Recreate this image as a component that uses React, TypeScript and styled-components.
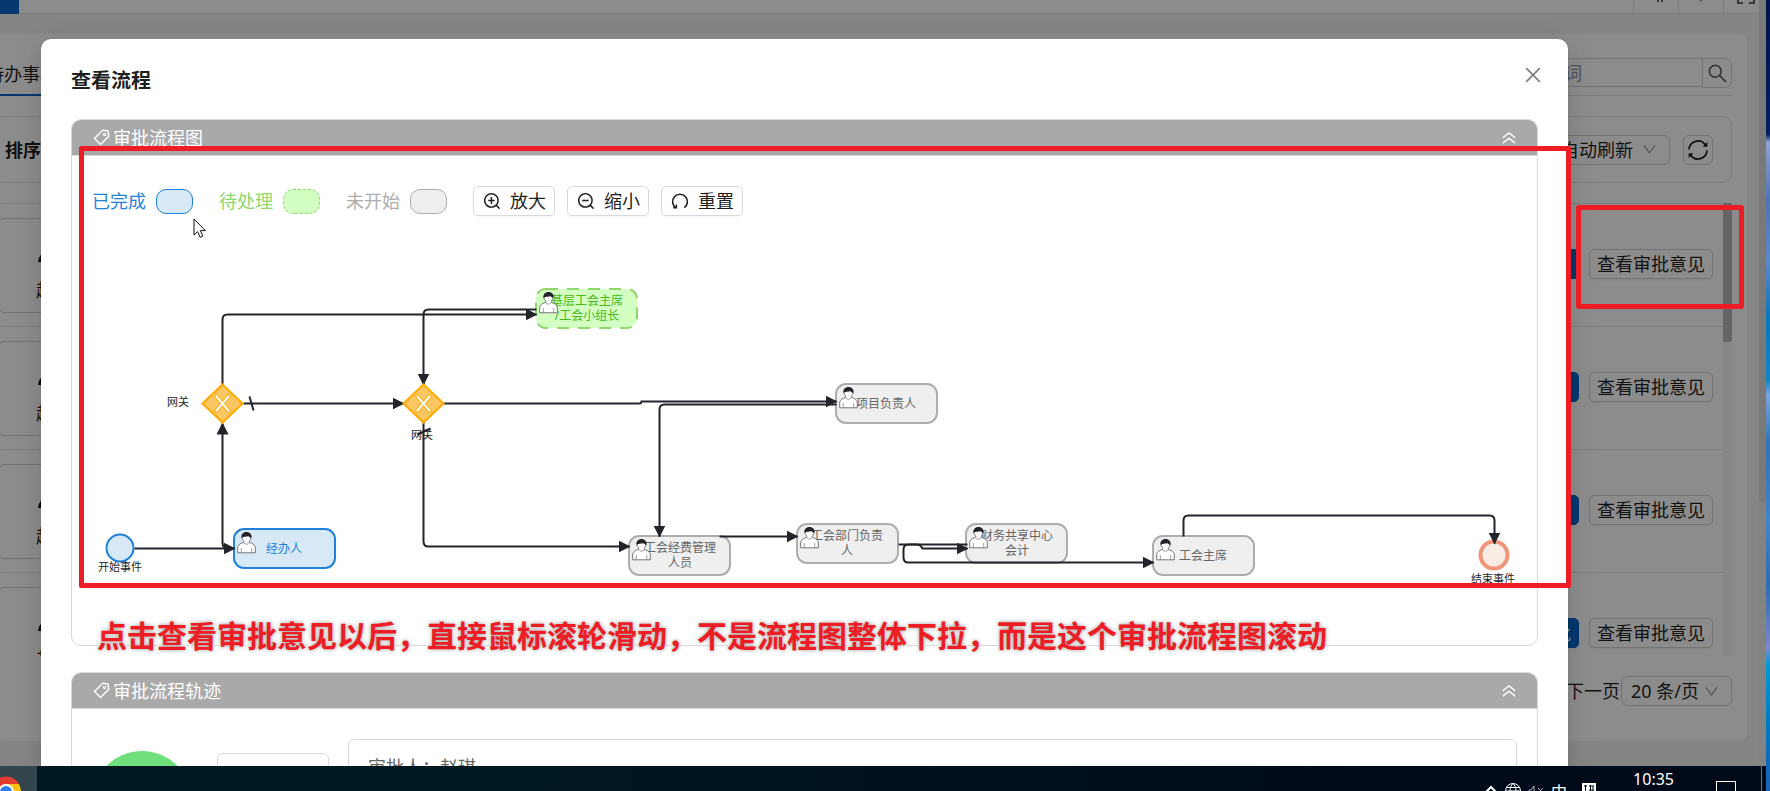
import React from 'react';
import styled, { createGlobalStyle } from 'styled-components';
import {
  AiOutlineClose,
  AiOutlineDoubleRight,
  AiOutlineDown,
  AiOutlineSearch,
  AiOutlineTag,
  AiOutlineZoomIn,
  AiOutlineZoomOut,
} from 'react-icons/ai';

const GlobalStyle = createGlobalStyle`
  *, *::before, *::after { box-sizing: border-box; }
  body {
    margin: 0;
    overflow: hidden;
    font-family: "Noto Sans", "Noto Sans CJK SC", sans-serif;
    font-size: 18px;
    line-height: 28px;
    color: #1f1f1f;
  }
  button, input, select { font: inherit; color: inherit; }
`;

const RED = '#ee1c25';
const BLUE = '#0a66c9';

/* ---------- desktop frame ---------- */

const Desktop = styled.div`
  display: grid;
  grid-template-columns: 1fr 4px;
  height: 100vh;
  overflow: hidden;
`;

const Screen = styled.div`
  display: flex;
  flex-direction: column;
  min-width: 0;
  min-height: 0;
`;

const Wallpaper = styled.div`
  background: linear-gradient(
    #00124a 0, #04205f 17%, #8fa5cc 18%, #4f74b6 25%, #5f86c8 33%, #0a78bc 40%,
    #1286c4 48%, #7fa3dc 50%, #2f74b4 56%, #3f86c4 66%, #2f6cb0 74%, #7f88cc 82%,
    #0098d4 84%, #0078c4 92%, #1a60b0 100%
  );
`;

const Browser = styled.div`
  position: relative;
  display: flex;
  flex: 1;
  min-height: 0;
  overflow: hidden;
  background: #f2f2f2;
`;

const PageScrollbar = styled.div`
  width: 7px;
  background: #eeeeee;
`;

const PageThumb = styled.div`
  height: 503px;
  background: #dcdcdc;
  border-radius: 0 0 3px 3px;
`;

/* ---------- page behind the dialog ---------- */

const Page = styled.div`
  display: flex;
  flex: 1;
  flex-direction: column;
  min-width: 0;
  margin-left: -14px;
`;

const TopBar = styled.header`
  display: flex;
  justify-content: space-between;
  height: 14px;
  background: #fff;
  border-bottom: 1px solid #e4e4e4;
`;

const ActiveTag = styled.div`
  width: 33px;
  height: 14px;
  background: ${BLUE};
`;

const TopTools = styled.div`
  display: flex;
`;

const TopTool = styled.div<{ $w: number }>`
  display: flex;
  align-items: flex-end;
  justify-content: ${(p) => (p.$w < 45 ? 'flex-end' : 'center')};
  width: ${(p) => p.$w}px;
  height: 13px;
  padding: 0 4px 9px;
  overflow: hidden;
  border-left: 1px solid #dedede;
  svg { flex: none; }
`;

const Card = styled.main`
  display: flex;
  flex: 1;
  flex-direction: column;
  min-height: 0;
  margin: 20px 12px 25px 0;
  padding: 0 15px 35px 0;
  background: #fff;
  border-radius: 8px;
`;

const TabRow = styled.div`
  display: flex;
  align-items: center;
  justify-content: space-between;
  height: 62px;
  border-bottom: 1px solid #e0e0e0;
`;

const Tab = styled.div`
  height: 62px;
  padding: 26px 24px 0 0;
  border-bottom: 2px solid ${BLUE};
`;

const SearchBox = styled.div`
  display: flex;
  align-self: flex-start;
  padding-top: 24px;
`;

const SearchInput = styled.input`
  width: 241px;
  height: 29px;
  padding: 0 12px;
  background: none;
  border: 1px solid #d0d0d0;
  border-right: 0;
  &::placeholder { color: #8f96a3; opacity: 1; }
`;

const SquareButton = styled.button<{ $edge?: boolean }>`
  display: flex;
  align-items: center;
  justify-content: center;
  width: 30px;
  height: 30px;
  padding: 0;
  background: none;
  border: 1px solid #d0d0d0;
  border-radius: ${(p) => (p.$edge ? '0 7px 7px 0' : '6px')};
`;

const FilterBar = styled.div`
  display: flex;
  align-items: center;
  justify-content: space-between;
  height: 67px;
  margin: 20px 0;
  padding: 0 18px;
  border: 1px solid #e2e2e2;
  border-radius: 10px;
`;

const FilterTitle = styled.strong`
  font-weight: 700;
`;

const FilterTools = styled.div`
  display: flex;
  gap: 13px;
`;

const SelectWrap = styled.label<{ $w: number }>`
  display: grid;
  align-items: center;
  width: ${(p) => p.$w}px;
  height: 30px;
  border: 1px solid #d0d0d0;
  border-radius: 6px;
  color: #a8a8a8;
  > * { grid-area: 1 / 1; }
  svg { justify-self: end; margin-right: 11px; pointer-events: none; }
`;

const Select = styled.select`
  width: 100%;
  height: 28px;
  padding: 0 0 0 9px;
  appearance: none;
  background: none;
  border: 0;
  color: #1f1f1f;
`;

const ListArea = styled.div`
  display: flex;
  flex: 1;
  min-height: 0;
  overflow: hidden;
`;

const List = styled.div`
  flex: 1;
  overflow: hidden;
`;

const ListTrack = styled.div`
  width: 9px;
  background: #f4f4f4;
`;

const ListThumb = styled.div`
  height: 139px;
  background: #b9b9b9;
  border-radius: 2px;
`;

const Row = styled.div`
  display: flex;
  align-items: center;
  height: 123px;
  padding: 0 10px 0 12px;
  border-top: 1px solid #e4e4e4;
`;

const RowCard = styled.div`
  display: flex;
  flex: 1;
  flex-direction: column;
  justify-content: flex-end;
  align-items: flex-start;
  height: 95px;
  margin-right: 260px;
  padding: 0 0 8px 37px;
  border: 1px solid #d0d0d0;
  border-radius: 6px;
`;

const RowActions = styled.div`
  display: flex;
  gap: 10px;
  padding-bottom: 2px;
`;

const RowButton = styled.button<{ $primary?: boolean }>`
  height: 30px;
  padding: 0 7px;
  line-height: 28px;
  background: ${(p) => (p.$primary ? BLUE : '#fff')};
  color: ${(p) => (p.$primary ? '#fff' : 'inherit')};
  border: 1px solid ${(p) => (p.$primary ? BLUE : '#d0d0d0')};
  border-radius: 5px;
  box-shadow: 0 2px 0 rgba(0, 0, 0, 0.03);
`;

const Pager = styled.div`
  display: flex;
  align-items: center;
  justify-content: flex-end;
  gap: 1px;
  margin-top: 20px;
`;

/* ---------- dialog ---------- */

const Mask = styled.div`
  position: absolute;
  inset: 0;
  padding: 39px 198px 0 41px;
  background: rgba(0, 0, 0, 0.45);
  overflow: hidden;
`;

const Modal = styled.section`
  min-height: 100%;
  background: #fff;
  border-radius: 10px 10px 0 0;
  box-shadow: 0 6px 16px rgba(0, 0, 0, 0.08), 0 3px 6px -4px rgba(0, 0, 0, 0.12),
    0 9px 28px 8px rgba(0, 0, 0, 0.05);
`;

const ModalHeader = styled.header`
  display: flex;
  align-items: flex-start;
  justify-content: space-between;
  padding: 26px 24px 0 30px;
`;

const ModalTitle = styled.h1`
  margin: 0;
  font-size: 20px;
  line-height: 32px;
  font-weight: 700;
`;

const CloseButton = styled.button`
  display: flex;
  align-items: center;
  justify-content: center;
  width: 22px;
  height: 20px;
  padding: 0;
  background: none;
  border: 0;
  color: #808080;
  svg { flex: none; }
`;

const ModalBody = styled.div`
  display: flex;
  flex-direction: column;
  gap: 26px;
  padding: 22px 30px;
`;

const Panel = styled.section`
  position: relative;
  border: 1px solid #d9d9d9;
  border-radius: 10px;
`;

const PanelHeader = styled.div`
  display: flex;
  align-items: center;
  height: 36px;
  padding: 0 19px 0 20px;
  background: #a9a9a9;
  border-bottom: 1px solid #d9d9d9;
  border-radius: 9px 9px 0 0;
  color: #fff;
`;

const PanelTitle = styled.h2`
  flex: 1;
  margin: 0 0 0 2px;
  font-size: 18px;
  line-height: 28px;
  font-weight: 400;
`;

const FoldButton = styled.button`
  display: flex;
  padding: 0;
  background: none;
  border: 0;
  color: #fff;
  svg { transform: rotate(-90deg); }
`;

const ToolRow = styled.div`
  display: flex;
  align-items: center;
  height: 60px;
  padding: 30px 20px 0;
`;

type Tone = 'done' | 'todo' | 'idle';

const tones: Record<Tone, { text: string; line: string; fill: string; label: string }> = {
  done: { text: '#1f82d8', line: '#1f82d8', fill: '#d7e8f7', label: '#1f82d8' },
  todo: { text: '#8fd66f', line: '#8fd66f', fill: '#d4ffc2', label: '#4ab81a' },
  idle: { text: '#adadad', line: '#adadad', fill: '#efefef', label: '#666666' },
};

const Legend = styled.span<{ $tone: Tone }>`
  display: flex;
  align-items: center;
  gap: 10px;
  margin-right: 26px;
  color: ${(p) => tones[p.$tone].text};
  &::after {
    content: '';
    width: 37px;
    height: 25px;
    background: ${(p) => tones[p.$tone].fill};
    border: 1px ${(p) => (p.$tone === 'todo' ? 'dashed' : 'solid')} ${(p) => tones[p.$tone].line};
    border-radius: 10px;
  }
`;

const Tools = styled.div`
  display: flex;
  gap: 12px;
`;

const ToolButton = styled.button`
  display: flex;
  align-items: center;
  gap: 8px;
  height: 30px;
  padding: 0 8px;
  background: #fff;
  border: 1px solid #d9d9d9;
  border-radius: 5px;
  box-shadow: 0 2px 0 rgba(0, 0, 0, 0.02);
`;

const FlowCanvas = styled.svg`
  display: block;
  width: 100%;
  height: 429px;
  overflow: hidden;
  text-anchor: middle;
`;

const TrackBody = styled.div`
  display: flex;
  align-items: flex-start;
  padding: 30px 20px;
`;

const TrackDot = styled.div`
  width: 100px;
  height: 100px;
  margin: 12px 25px 0 0;
  background: #6fe07c;
  border-radius: 50%;
`;

const TrackTag = styled.div`
  width: 112px;
  height: 60px;
  margin: 14px 19px 0 0;
  border: 1px solid #d9d9d9;
  border-radius: 6px;
`;

const TrackCard = styled.div`
  flex: 1;
  min-height: 120px;
  padding: 13px 19px;
  border: 1px solid #d9d9d9;
  border-radius: 6px;
  color: #666;
`;

/* ---------- annotations ---------- */

const FlowFrame = styled.div`
  position: absolute;
  top: 26px;
  right: -34px;
  bottom: 57px;
  left: 7px;
  border: 5px solid ${RED};
  border-radius: 2px;
  pointer-events: none;
`;

const ButtonFrame = styled.div`
  position: absolute;
  top: 205px;
  right: 22px;
  width: 168px;
  height: 104px;
  border: 5px solid ${RED};
  border-radius: 3px;
`;

const Caption = styled.p`
  position: absolute;
  left: 25px;
  top: 496px;
  margin: 0;
  font-size: 30px;
  line-height: 40px;
  font-weight: 700;
  white-space: nowrap;
  color: ${RED};
  -webkit-text-stroke: 3px #fff;
  paint-order: stroke fill;
  text-shadow: 0 0 4px #999;
`;

const Pointer = styled.svg`
  position: absolute;
  left: 121px;
  top: 98px;
`;

/* ---------- taskbar ---------- */

const Taskbar = styled.footer`
  display: flex;
  align-items: flex-start;
  height: 25px;
  overflow: hidden;
  background: linear-gradient(90deg, #001820 30%, #00101c 60%, #000a18 80%);
  color: #fff;
`;

const TaskItem = styled.div`
  width: 37px;
  height: 25px;
  overflow: hidden;
  background: #33454d;
`;

const Tray = styled.div`
  display: flex;
  align-items: flex-start;
  gap: 6px;
  margin-left: auto;
  padding-top: 16px;
`;

const TrayText = styled.span`
  width: 18px;
  margin-right: 7px;
  font-size: 16px;
  line-height: 20px;
  text-align: center;
`;

const Clock = styled.time`
  margin: 3px 42px 0 36px;
  font-size: 16px;
  line-height: 20px;
`;

const Notice = styled.div`
  width: 20px;
  height: 16px;
  margin: 15px 25px 0 0;
  border: 1px solid #fff;
`;

const ShowDesktop = styled.div`
  width: 5px;
  height: 25px;
  border-left: 1px solid #6b7680;
`;

/* ---------- flow chart data ---------- */

interface TaskData {
  x: number;
  y: number;
  tone: Tone;
  lines: string[];
  cx: number;
}

const tasks: TaskData[] = [
  { x: 162, y: 313, tone: 'done', lines: ['经办人'], cx: 212 },
  { x: 464, y: 73, tone: 'todo', lines: ['基层工会主席', '/工会小组长'], cx: 515 },
  { x: 764, y: 168, tone: 'idle', lines: ['项目负责人'], cx: 814 },
  { x: 557, y: 320, tone: 'idle', lines: ['工会经费管理', '人员'], cx: 608 },
  { x: 725, y: 308, tone: 'idle', lines: ['工会部门负责', '人'], cx: 775 },
  { x: 894, y: 308, tone: 'idle', lines: ['财务共享中心', '会计'], cx: 945 },
  { x: 1081, y: 320, tone: 'idle', lines: ['工会主席'], cx: 1131 },
];

const edges = [
  'M62 332 H162',
  'M156 332 Q150 332 150 326 V207',
  'M150 168 V103 Q150 98 155 98 H464',
  'M464 93 H356 Q351 93 351 98 V168',
  'M171 187 H331',
  'M371 187 H567 Q569 187 569 185 H764',
  'M764 188 H592 Q587 188 587 193 V320',
  'M351 206 V325 Q351 330 356 330 H557',
  'M647 320 H725',
  'M826 328 H844 Q848 328 850 332 H895',
  'M895 328 H836 Q831 328 831 333 V341 Q831 346 836 346 H1081',
  'M1111 320 V304 Q1111 299 1116 299 H1417 Q1422 299 1422 304 V327',
];

function UserGlyph({ x, y }: { x: number; y: number }) {
  return (
    <g transform={`translate(${x} ${y})`}>
      <path
        d="M6.5 10.5 C2.5 11.5 0.7 13.5 0.7 16 V20.8 H18.3 V16 C18.3 13.5 16.5 11.5 12.5 10.5 L12 9.4 C13.4 8.4 14 6.8 14 5 C14 2.5 12.2 0.8 9.5 0.8 S5 2.5 5 5 C5 6.8 5.6 8.4 7 9.4 Z"
        fill="#fff"
        stroke="#55565c"
        strokeWidth="0.8"
      />
      <path d="M6.5 10.5 Q9.5 14 12.5 10.5 M4.3 20.5 V16 M14.7 20.5 V16" fill="none" stroke="#77787d" strokeWidth="0.7" />
      <path d="M4.6 6 C3.8 2.2 6.4 0 9.5 0 S15.2 2.2 14.4 6 C13 5.6 12.6 4.6 11.4 4.2 C9.4 5 6.4 4.2 4.6 6 Z" fill="#22242a" />
    </g>
  );
}

function TaskNode({ task }: { task: TaskData }) {
  const tone = tones[task.tone];
  const first = task.y + 24 - (task.lines.length - 1) * 8;
  return (
    <g>
      <rect
        x={task.x}
        y={task.y}
        width="101"
        height="39"
        rx="10"
        fill={tone.fill}
        stroke={tone.line}
        strokeWidth="2"
        strokeDasharray={task.tone === 'todo' ? '12 9' : undefined}
      />
      {task.lines.map((line, i) => (
        <text key={line} x={task.cx} y={first + i * 15} fontSize="12" fill={tone.label}>
          {line}
        </text>
      ))}
      <UserGlyph x={task.x + 3} y={task.y + 3} />
    </g>
  );
}

function Gateway({ x, y }: { x: number; y: number }) {
  return (
    <g transform={`translate(${x} ${y})`}>
      <path d="M0 -19 L20 0 L0 19 L-20 0 Z" fill="#fbc765" stroke="#ffaa00" strokeWidth="2" />
      <path d="M-6 -7 L6 7 M6 -7 L-6 7" stroke="#ffaa00" strokeWidth="4" strokeLinecap="square" />
      <path d="M-6 -7 L6 7 M6 -7 L-6 7" stroke="#fff" strokeWidth="2" strokeLinecap="square" />
    </g>
  );
}

function FlowChart() {
  return (
    <FlowCanvas role="img" aria-label="审批流程图">
      <defs>
        <marker id="arrow" markerWidth="12" markerHeight="12" refX="11" refY="6" orient="auto" markerUnits="userSpaceOnUse">
          <path d="M0 0 L12 6 L0 12 Z" fill="#22242a" />
        </marker>
      </defs>
      <circle cx="48" cy="332" r="13.5" fill="#d7e8f7" stroke="#1f82d8" strokeWidth="2" />
      <circle cx="1422" cy="339" r="13.5" fill="#f8ebe3" stroke="#ee957a" strokeWidth="4" />
      {tasks.map((t) => (
        <TaskNode key={t.lines[0]} task={t} />
      ))}
      <g transform="translate(0.5 0.5)">
        {edges.map((d) => (
          <path key={d} d={d} fill="none" stroke="#22242a" strokeWidth="2" markerEnd="url(#arrow)" />
        ))}
        <path d="M177 180 L181 194 M345 218 L358 212" stroke="#22242a" strokeWidth="2" />
        <Gateway x={150} y={187} />
        <Gateway x={351} y={187} />
      </g>
      <g fontSize="11" fill="#22242a">
        <text x="48" y="355">开始事件</text>
        <text x="106" y="190">网关</text>
        <text x="350" y="223">网关</text>
        <text x="1421" y="367">结束事件</text>
      </g>
    </FlowCanvas>
  );
}

function ResetIcon() {
  return (
    <svg width="20" height="20" viewBox="0 0 20 20" fill="none" stroke="currentColor" strokeWidth="1.6">
      <path d="M5.6 16.6 A7.4 7.4 0 1 1 14.4 16.6" />
      <path d="M3.2 16.8 H6.4 V13.6" strokeWidth="1.4" />
    </svg>
  );
}

function RefreshIcon() {
  return (
    <svg width="22" height="22" viewBox="0 0 22 22" fill="none" stroke="currentColor" strokeWidth="1.8">
      <path d="M2 10.5 A9 9 0 0 1 18.6 6.2 M20 11.5 A9 9 0 0 1 3.4 15.8" />
      <path d="M20.4 3 V7.8 H15.6 Z M1.6 19 V14.2 H6.4 Z" fill="currentColor" stroke="none" />
    </svg>
  );
}

function PanelHead({ title }: { title: string }) {
  return (
    <PanelHeader>
      <AiOutlineTag size={19} />
      <PanelTitle>{title}</PanelTitle>
      <FoldButton aria-label="收起">
        <AiOutlineDoubleRight size={18} />
      </FoldButton>
    </PanelHeader>
  );
}

export default function App() {
  return (
    <Desktop>
      <GlobalStyle />
      <Screen>
        <Browser>
          <Page>
            <TopBar>
              <ActiveTag />
              <TopTools>
                <TopTool $w={45}>
                  <svg width="14" height="6" viewBox="0 0 14 6" fill="#666">
                    <path d="M1 0 H4 V2 H1 Z M8 0 H10 V4 H12 V2 H14 V4 H8 Z" />
                  </svg>
                </TopTool>
                <TopTool $w={45}>
                  <svg width="4" height="6" viewBox="0 0 4 6" fill="#666">
                    <path d="M0 0 H4 L2 4 Z" />
                  </svg>
                </TopTool>
                <TopTool $w={36}>
                  <svg width="18" height="18" viewBox="0 0 18 18" fill="none" stroke="#666" strokeWidth="2">
                    <path d="M1 6 V1 H6 M12 1 H17 V6 M17 12 V17 H12 M6 17 H1 V12" />
                  </svg>
                </TopTool>
              </TopTools>
            </TopBar>
            <Card>
              <TabRow>
                <Tab>待办事项</Tab>
                <SearchBox>
                  <SearchInput aria-label="关键词" placeholder="请输入关键词" />
                  <SquareButton $edge aria-label="搜索">
                    <AiOutlineSearch size={23} color="#666" />
                  </SquareButton>
                </SearchBox>
              </TabRow>
              <FilterBar>
                <FilterTitle>排序</FilterTitle>
                <FilterTools>
                  <SelectWrap $w={119}>
                    <Select aria-label="自动刷新">
                      <option>自动刷新</option>
                    </Select>
                    <AiOutlineDown size={17} />
                  </SelectWrap>
                  <SquareButton aria-label="刷新">
                    <RefreshIcon />
                  </SquareButton>
                </FilterTools>
              </FilterBar>
              <ListArea>
                <List>
                  {[0, 1, 2, 3].map((i) => (
                    <Row key={i}>
                      <RowCard>
                        <svg width="28" height="28" viewBox="0 0 28 28">
                          <path d="M2 14 C3 7 7 3 14 3 S25 7 26 14 Z" fill="#111" />
                        </svg>
                        <span>赵琪</span>
                      </RowCard>
                      <RowActions>
                        <RowButton $primary>审批</RowButton>
                        <RowButton>查看审批意见</RowButton>
                      </RowActions>
                    </Row>
                  ))}
                </List>
                <ListTrack>
                  <ListThumb />
                </ListTrack>
              </ListArea>
              <Pager>
                <span>下一页</span>
                <SelectWrap $w={111}>
                  <Select aria-label="每页条数">
                    <option>20 条/页</option>
                  </Select>
                  <AiOutlineDown size={17} />
                </SelectWrap>
              </Pager>
            </Card>
          </Page>
          <PageScrollbar>
            <PageThumb />
          </PageScrollbar>

          <Mask>
            <Modal role="dialog" aria-label="查看流程">
              <ModalHeader>
                <ModalTitle>查看流程</ModalTitle>
                <CloseButton aria-label="关闭">
                  <AiOutlineClose size={22} />
                </CloseButton>
              </ModalHeader>
              <ModalBody>
                <Panel>
                  <PanelHead title="审批流程图" />
                  <ToolRow>
                    <Legend $tone="done">已完成</Legend>
                    <Legend $tone="todo">待处理</Legend>
                    <Legend $tone="idle">未开始</Legend>
                    <Tools>
                      <ToolButton>
                        <AiOutlineZoomIn size={20} />
                        放大
                      </ToolButton>
                      <ToolButton>
                        <AiOutlineZoomOut size={20} />
                        缩小
                      </ToolButton>
                      <ToolButton>
                        <ResetIcon />
                        重置
                      </ToolButton>
                    </Tools>
                  </ToolRow>
                  <FlowChart />
                  <FlowFrame />
                  <Caption>点击查看审批意见以后，直接鼠标滚轮滑动，不是流程图整体下拉，而是这个审批流程图滚动</Caption>
                  <Pointer width="14" height="21" viewBox="0 0 14 21">
                    <path d="M1 1 V17 L4.6 13.6 L7.2 19.4 L9.8 18.2 L7.4 12.6 H12.4 Z" fill="#fff" stroke="#111" />
                  </Pointer>
                </Panel>
                <Panel>
                  <PanelHead title="审批流程轨迹" />
                  <TrackBody>
                    <TrackDot />
                    <TrackTag />
                    <TrackCard>审批人：赵琪</TrackCard>
                  </TrackBody>
                </Panel>
              </ModalBody>
            </Modal>
          </Mask>
          <ButtonFrame />
        </Browser>
        <Taskbar>
          <TaskItem>
            <svg width="37" height="25" viewBox="0 0 37 25">
              <circle cx="6" cy="26" r="15" fill="#fbc116" />
              <path d="M-9 26 A15 15 0 0 1 19 18 H6 L-2 24 Z" fill="#e33b2e" />
              <circle cx="6" cy="26" r="8" fill="#fff" />
              <circle cx="6" cy="26" r="6" fill="#2f7ded" />
            </svg>
          </TaskItem>
          <Tray>
            <svg width="14" height="14" viewBox="0 0 14 14" fill="none" stroke="#fff" strokeWidth="2">
              <path d="M2 10 L7 5 L12 10" />
            </svg>
            <svg width="18" height="18" viewBox="0 0 18 18" fill="none" stroke="#fff">
              <circle cx="9" cy="9" r="7.5" />
              <path d="M9 1.5 C5 5 5 13 9 16.5 C13 13 13 5 9 1.5 M2.5 5.5 H15.5 M1.5 9 H16.5" />
            </svg>
            <svg width="16" height="16" viewBox="0 0 16 16" fill="none" stroke="#aab4ba">
              <path d="M1 8 H3 L6 4 V14 L3 11 H1 Z M10 6 L15 11 M15 6 L10 11" />
            </svg>
            <TrayText>中</TrayText>
            <svg width="16" height="16" viewBox="0 0 16 16">
              <path d="M1 1 H15 V15 H1 Z" fill="#fff" />
              <path d="M3 4 H6 M4.5 3 V12 M8 4 H13 M9.5 3 V12 M12 4 V12 M8 8 H13" stroke="#000a18" fill="none" />
            </svg>
          </Tray>
          <Clock>10:35</Clock>
          <Notice />
          <ShowDesktop />
        </Taskbar>
      </Screen>
      <Wallpaper />
    </Desktop>
  );
}
